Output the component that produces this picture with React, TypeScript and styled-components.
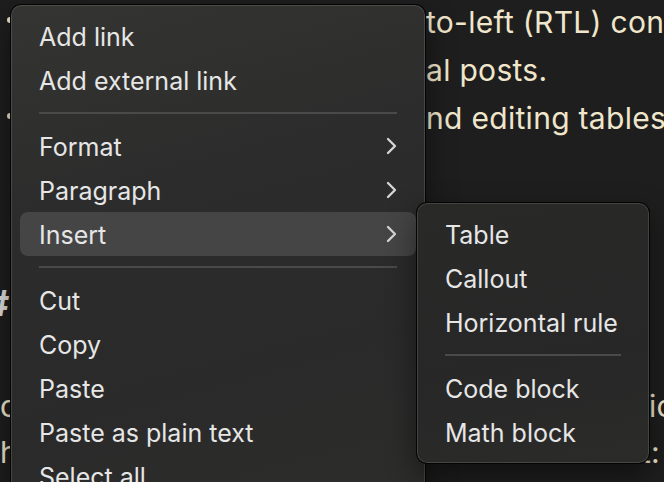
import React from "react";
import styled, { createGlobalStyle } from "styled-components";

const Global = createGlobalStyle`
  html, body { margin: 0; padding: 0; background: #1e1e1e; }
  body {
    font-family: Inter, "Noto Sans", sans-serif;
    -webkit-font-smoothing: antialiased;
  }
`;

const Screen = styled.div`
  position: relative;
  width: 664px;
  height: 482px;
  overflow: hidden;
  background: #1e1e1e;
`;

/* ---------- document behind the menus ---------- */
const Doc = styled.div`
  display: flex;
  flex-direction: column;
  margin-top: -2px;
  font-size: 30px;
  line-height: 48px;
  letter-spacing: 0.3px;
  color: #f0e6cb;
  white-space: nowrap;
`;

const Line = styled.div<{ $mt?: number; $h?: number }>`
  display: grid;
  grid-template-columns: 426px 1fr;
  height: ${(p) => p.$h ?? 48}px;
  margin-top: ${(p) => p.$mt ?? 0}px;
`;

const Gutter = styled.div`
  display: flex;
  align-items: flex-start;
  min-width: 0;
`;

const Bullet = styled.span`
  width: 6px;
  height: 6px;
  margin: 19px 0 0 7px;
  border-radius: 50%;
  background: #f0e6cb;
`;

const HeadingMark = styled.span`
  margin-left: -14px;
  font-size: 36px;
  line-height: 50px;
  font-weight: 700;
  color: #dedede;
`;

const Body = styled.div<{ $align?: "start" | "end"; $shift?: number }>`
  min-width: 0;
  display: flex;
  justify-content: ${(p) => (p.$align === "end" ? "flex-end" : "flex-start")};
  margin-right: ${(p) => -(p.$shift ?? 0)}px;
  padding-right: ${(p) => (p.$align === "end" ? 4 : 0)}px;
`;

/* ---------- menus ---------- */
const Menu = styled.div<{ $left: number; $top: number; $width: number; $dark?: boolean }>`
  position: absolute;
  left: ${(p) => p.$left}px;
  top: ${(p) => p.$top}px;
  width: ${(p) => p.$width}px;
  box-sizing: border-box;
  display: flex;
  flex-direction: column;
  padding: 9px;
  border-radius: 11px;
  border: 1px solid rgba(0, 0, 0, 0.9);
  background: ${(p) =>
    p.$dark
      ? "linear-gradient(170deg, #292928 0%, #272727 60%, #2b2b2a 100%)"
      : "linear-gradient(165deg, #343432 0%, #2c2c2c 35%, #2a2a2a 70%, #2d2d2c 100%)"};
  box-shadow: inset 0 0 0 1px rgba(255, 255, 255, 0.13), 0 12px 30px rgba(0, 0, 0, 0.45);
`;

const Item = styled.div<{ $active?: boolean }>`
  display: flex;
  align-items: center;
  justify-content: space-between;
  height: 44px;
  padding: 0 19px;
  border-radius: 8px;
  background: ${(p) => (p.$active ? "#454545" : "transparent")};
  color: #e6e6e6;
  font-size: 25px;
  line-height: 44px;
  white-space: nowrap;
`;

const Label = styled.span`
  position: relative;
  top: 1px;
`;

const Separator = styled.div`
  height: 2px;
  margin: 10px 19px;
  background: #4a4a4a;
`;

const Chevron = () => (
  <svg width="11" height="18" viewBox="0 0 11 18" fill="none">
    <path
      d="M2 2 L9 9 L2 16"
      stroke="#d6d6d6"
      strokeWidth="2.3"
      strokeLinecap="round"
      strokeLinejoin="round"
    />
  </svg>
);

type Entry = { label: string; sub?: boolean; active?: boolean } | "sep";

const mainEntries: Entry[] = [
  { label: "Add link" },
  { label: "Add external link" },
  "sep",
  { label: "Format", sub: true },
  { label: "Paragraph", sub: true },
  { label: "Insert", sub: true, active: true },
  "sep",
  { label: "Cut" },
  { label: "Copy" },
  { label: "Paste" },
  { label: "Paste as plain text" },
  { label: "Select all" },
];

const insertEntries: Entry[] = [
  { label: "Table" },
  { label: "Callout" },
  { label: "Horizontal rule" },
  "sep",
  { label: "Code block" },
  { label: "Math block" },
];

const renderEntries = (entries: Entry[]) =>
  entries.map((e, i) =>
    e === "sep" ? (
      <Separator key={i} />
    ) : (
      <Item key={i} $active={e.active}>
        <Label>{e.label}</Label>
        {e.sub && <Chevron />}
      </Item>
    )
  );

export default function App() {
  return (
    <Screen>
      <Global />
      <Doc>
        <Line>
          <Gutter>
            <Bullet />
          </Gutter>
          <Body>to-left (RTL) content</Body>
        </Line>
        <Line>
          <Gutter />
          <Body>al posts.</Body>
        </Line>
        <Line>
          <Gutter>
            <Bullet />
          </Gutter>
          <Body>nd editing tables.</Body>
        </Line>
        <Line $mt={136} $h={50}>
          <Gutter>
            <HeadingMark>#</HeadingMark>
          </Gutter>
          <Body />
        </Line>
        <Line $mt={54}>
          <Gutter>c</Gutter>
          <Body $align="end" $shift={14}>ic</Body>
        </Line>
        <Line $mt={-2}>
          <Gutter>h</Gutter>
          <Body $align="end">s more efficient:</Body>
        </Line>
      </Doc>

      <Menu $left={10} $top={4} $width={416}>
        {renderEntries(mainEntries)}
      </Menu>
      <Menu $left={416} $top={202} $width={234} $dark>
        {renderEntries(insertEntries)}
      </Menu>
    </Screen>
  );
}
